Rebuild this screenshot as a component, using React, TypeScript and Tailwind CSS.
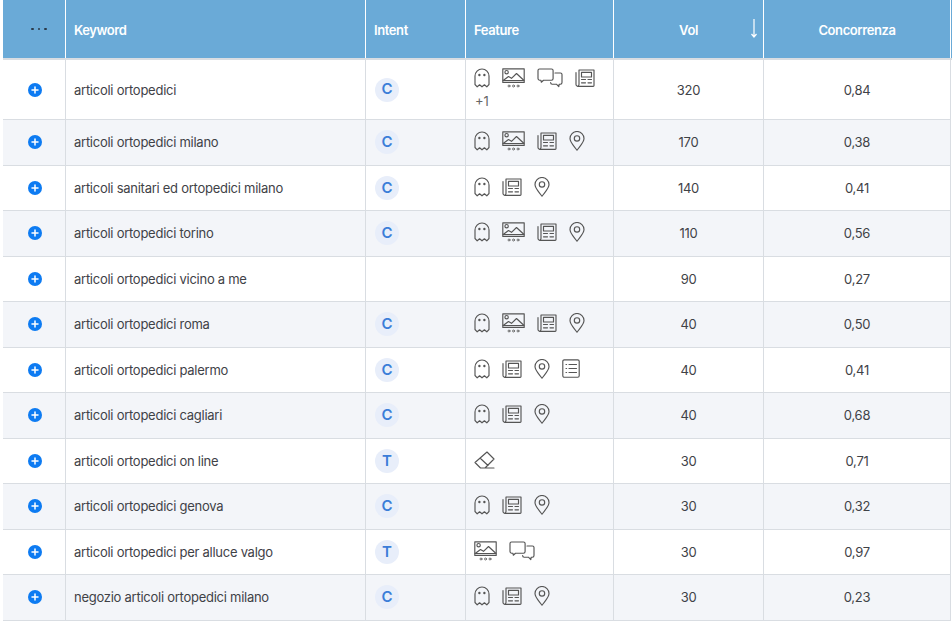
const S = "#555555";
const base = { fill: "none", stroke: S, strokeWidth: 1.15, strokeLinecap: "round", strokeLinejoin: "round" } as const;

function Ghost() {
  return (
    <svg width="16" height="20" viewBox="0 0 16 20" {...base}>
      <path d="M1 16.500V8a7 7 0 0 1 14 0v8.500l-2.200 2.300-2.400-2-2.400 2-2.400-2-2.400 2L1 16.500z" />
      <circle cx="5.400" cy="7" r=".6" fill={S} />
      <circle cx="10.400" cy="7" r=".6" fill={S} />
    </svg>
  );
}
function Picture() {
  return (
    <svg width="23" height="20" viewBox="0 0 23 20" {...base}>
      <rect x=".8" y=".8" width="21.400" height="13.600" />
      <circle cx="4.600" cy="4.200" r="1.700" />
      <path d="M1.500 12.300l5-3.800 3 1.800 5-4.800 7 6.500M1 12.500h21" />
      <g strokeWidth=".8">
        <circle cx="7" cy="18" r="1" />
        <circle cx="11.500" cy="18" r="1" />
        <circle cx="16" cy="18" r="1" />
      </g>
    </svg>
  );
}
function Chat() {
  return (
    <svg width="26" height="20" viewBox="0 0 26 20" {...base}>
      <path d="M2.500 1h12a1.600 1.600 0 0 1 1.600 1.600v8a1.600 1.600 0 0 1-1.600 1.600H6.500l-2.200 2-.4-2H2.500A1.600 1.600 0 0 1 1 10.600v-8A1.600 1.600 0 0 1 2.500 1z" />
      <path d="M18 5h5.400A1.600 1.600 0 0 1 25 6.600v8a1.600 1.600 0 0 1-1.600 1.600h-1.200l-.4 2.400-2.400-2.400h-4.200a1.600 1.600 0 0 1-1.600-1.600" />
    </svg>
  );
}
function News() {
  return (
    <svg width="20" height="18" viewBox="0 0 20 18" {...base}>
      <path d="M4 1h15v15.500a.8.8 0 0 1-.8.8H2.500A1.700 1.700 0 0 1 1 15.600V3.500M4 1v14.500a1.800 1.800 0 0 1-1.500 1.800" />
      <rect x="6.500" y="3.300" width="10" height="4.700" />
      <path d="M6.500 10.500h4M6.500 13.800h4M13 10.500h3.500M13 13.800h3.500" />
    </svg>
  );
}
function Pin() {
  return (
    <svg width="16" height="20" viewBox="0 0 16 20" {...base}>
      <path d="M8 19.200C5.500 15.500 1 11.500 1 7.500a7 7 0 0 1 14 0c0 4-4.500 8-7 11.700z" />
      <circle cx="8" cy="7.400" r="2.700" />
    </svg>
  );
}
function ListIcon() {
  return (
    <svg width="18" height="19" viewBox="0 0 18 19" {...base}>
      <rect x=".8" y=".8" width="16.400" height="17.400" rx="1.500" />
      <path d="M4 5.500h.6M4 9.500h.6M4 13.500h.6M7 5.500h7.500M7 9.500h7.500M7 13.500h7.500" />
    </svg>
  );
}
function Eraser() {
  return (
    <svg width="21" height="18" viewBox="0 0 21 18" {...base}>
      <path d="M1 11.500L13 1l7 7-9 9H6.500L1 11.500zM6 7l8 7.500M11 17h9" />
    </svg>
  );
}

const ICONS = { g: Ghost, p: Picture, c: Chat, n: News, m: Pin, l: ListIcon, e: Eraser };
type K = keyof typeof ICONS;

const rows: { k: string; i: string; f: K[]; more?: boolean; v: string; c: string }[] = [
  { k: "articoli ortopedici", i: "C", f: ["g", "p", "c", "n"], more: true, v: "320", c: "0,84" },
  { k: "articoli ortopedici milano", i: "C", f: ["g", "p", "n", "m"], v: "170", c: "0,38" },
  { k: "articoli sanitari ed ortopedici milano", i: "C", f: ["g", "n", "m"], v: "140", c: "0,41" },
  { k: "articoli ortopedici torino", i: "C", f: ["g", "p", "n", "m"], v: "110", c: "0,56" },
  { k: "articoli ortopedici vicino a me", i: "", f: [], v: "90", c: "0,27" },
  { k: "articoli ortopedici roma", i: "C", f: ["g", "p", "n", "m"], v: "40", c: "0,50" },
  { k: "articoli ortopedici palermo", i: "C", f: ["g", "n", "m", "l"], v: "40", c: "0,41" },
  { k: "articoli ortopedici cagliari", i: "C", f: ["g", "n", "m"], v: "40", c: "0,68" },
  { k: "articoli ortopedici on line", i: "T", f: ["e"], v: "30", c: "0,71" },
  { k: "articoli ortopedici genova", i: "C", f: ["g", "n", "m"], v: "30", c: "0,32" },
  { k: "articoli ortopedici per alluce valgo", i: "T", f: ["p", "c"], v: "30", c: "0,97" },
  { k: "negozio articoli ortopedici milano", i: "C", f: ["g", "n", "m"], v: "30", c: "0,23" },
];

export default function App() {
  return (
    <div className="h-[623px] w-[952px] overflow-hidden bg-white pl-[3px] font-['Inter',sans-serif] text-[13px] tracking-[-0.26px] text-[#3f4247]">
      <div className="flex h-[60px] border-b-2 border-[#d9dde2] bg-[#6aaad7] font-semibold tracking-[-0.4px] text-white">
        <div className="flex w-[63px] items-center justify-center gap-[4px] border-r border-white pl-[10px]">
          <span className="h-[2.500px] w-[2.500px] rounded-full bg-[#2b3a4a]" />
          <span className="h-[2.500px] w-[2.500px] rounded-full bg-[#2b3a4a]" />
          <span className="h-[2.500px] w-[2.500px] rounded-full bg-[#2b3a4a]" />
        </div>
        <div className="flex w-[300px] items-center border-r border-white pl-2 pt-[3px]">Keyword</div>
        <div className="flex w-[100px] items-center border-r border-white pl-2 pt-[3px]">Intent</div>
        <div className="flex w-[148px] items-center border-r border-white pl-2 pt-[3px]">Feature</div>
        <div className="relative flex w-[150px] items-center justify-center border-r border-white pt-[3px]">
          Vol
          <svg className="absolute right-[5px] top-[19px]" width="8" height="19" viewBox="0 0 8 19" fill="none" stroke="white" strokeWidth="1.200">
            <path d="M4 0v17M1.500 15L4 18l2.500-3" />
          </svg>
        </div>
        <div className="flex w-[187px] items-center justify-center border-r border-white pt-[3px]">Concorrenza</div>
      </div>
      {rows.map((r, idx) => {
        const pad = idx === 0 ? "pt-[2px]" : "pt-[1px]";
        return (
          <div
            key={r.k}
            className={`flex w-[948px] border-b border-[#d9dde2] ${idx === 0 ? "h-[60px]" : "h-[45.5px]"} ${idx % 2 ? "bg-[#f3f5f9]" : "bg-white"}`}
          >
            <div className="flex w-[63px] items-center justify-center border-r border-[#d9dde2] pl-[2px]">
              <svg width="14" height="14" viewBox="0 0 14 14">
                <circle cx="7" cy="7" r="7" fill="#0d7bf2" />
                <path d="M7 4v6M4 7h6" stroke="white" strokeWidth="1.500" strokeLinecap="round" />
              </svg>
            </div>
            <div className={`flex w-[300px] items-center border-r border-[#d9dde2] pl-2 ${pad}`}>{r.k}</div>
            <div className="flex w-[100px] items-center border-r border-[#d9dde2] pl-[9px]">
              {r.i && (
                <span className="flex h-6 w-6 items-center justify-center rounded-full bg-[#e8eefa] text-[15px] font-semibold tracking-normal text-[#3b7dd8]">
                  {r.i}
                </span>
              )}
            </div>
            <div className="flex w-[148px] flex-col justify-center border-r border-[#d9dde2] pb-[2px] pl-2">
              {r.f.length > 0 && (
                <div className="flex items-center gap-3">
                  {r.f.map((f, j) => {
                    const I = ICONS[f];
                    return <I key={j} />;
                  })}
                </div>
              )}
              {r.more && <div className="mt-[5px] pl-[1px] text-[13px] leading-4 tracking-normal text-[#666]">+1</div>}
            </div>
            <div className={`flex w-[150px] items-center justify-center border-r border-[#d9dde2] ${pad}`}>{r.v}</div>
            <div className={`flex w-[187px] items-center justify-center border-r border-[#d9dde2] ${pad}`}>{r.c}</div>
          </div>
        );
      })}
    </div>
  );
}
